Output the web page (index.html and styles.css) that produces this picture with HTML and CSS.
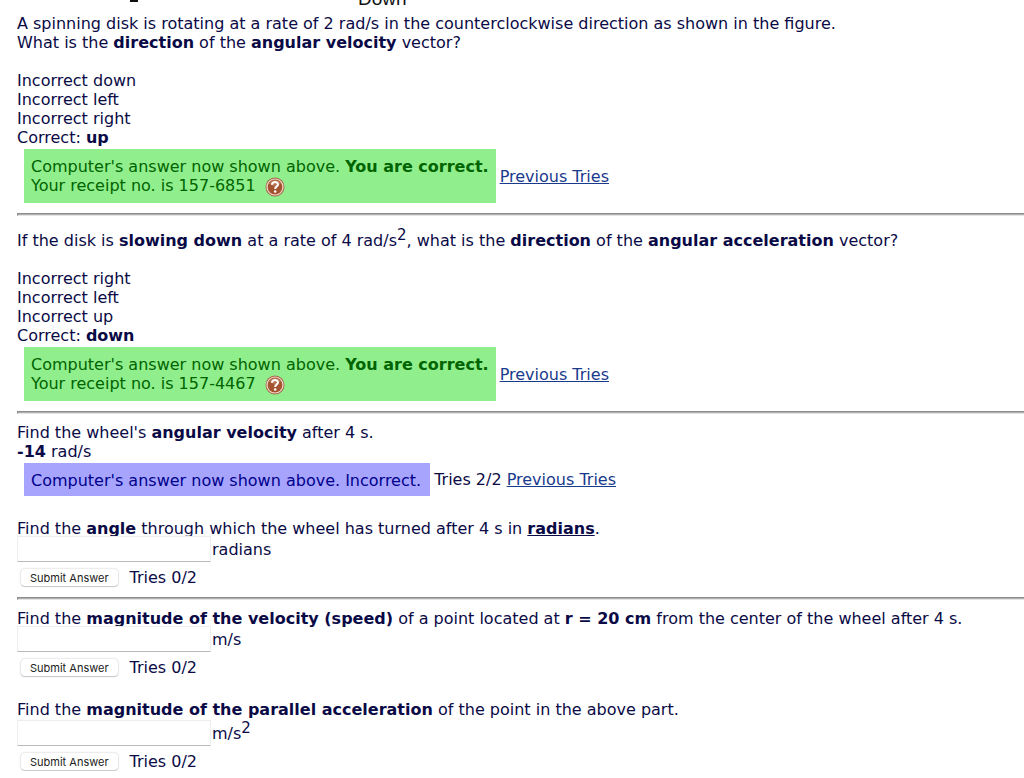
FILE: index.html
```html
<!DOCTYPE html>
<html lang="en">
<head>
    <meta charset="UTF-8">
    <meta name="viewport" content="width=device-width, initial-scale=1.0">
    <title>Rotating Disk</title>
    <link rel="stylesheet" href="styles.css">
</head>
<body>
    <svg class="symbols" aria-hidden="true">
        <symbol id="help" viewBox="0 0 20 20">
            <circle cx="10" cy="10" r="9.5" fill="#a8664c"/>
            <circle cx="10" cy="10" r="8.6" fill="#f3dccb"/>
            <circle cx="10" cy="10" r="7.4" fill="#a3532f"/>
            <path d="M4 6.5a7 7 0 0 1 12 0L10 10z" fill="#b87352"/>
            <path d="M7 7.8C7.1 4 13 4.2 13 7.5C13 9.6 10.2 9.5 10.2 12" fill="none" stroke="#fff" stroke-width="2.1"/>
            <circle cx="10.2" cy="14.5" r="1.3" fill="#fff"/>
        </symbol>
    </svg>

    <div class="figure">
        <span class="mark"></span>
        <span class="caption">Down</span>
    </div>

    <!-- Direction of angular velocity -->
    <div class="problem">
        <p>A spinning disk is rotating at a rate of 2 rad/s in the counterclockwise direction as shown in the figure.<br>
        What is the <b>direction</b> of the <b>angular velocity</b> vector?</p>
        <ul class="choices">
            <li>Incorrect down</li>
            <li>Incorrect left</li>
            <li>Incorrect right</li>
            <li>Correct: <b>up</b></li>
        </ul>
        <div class="status">
            <div class="result correct">Computer's answer now shown above. <b>You are correct.</b><br>
            Your receipt no. is 157-6851 <svg class="help"><use href="#help"/></svg></div>
            <a href="#">Previous Tries</a>
        </div>
    </div>
    <hr>

    <!-- Direction of angular acceleration -->
    <div class="problem slowing">
        <p>If the disk is <b>slowing down</b> at a rate of 4 rad/s<sup>2</sup>, what is the <b>direction</b> of the <b>angular acceleration</b> vector?</p>
        <ul class="choices">
            <li>Incorrect right</li>
            <li>Incorrect left</li>
            <li>Incorrect up</li>
            <li>Correct: <b>down</b></li>
        </ul>
        <div class="status">
            <div class="result correct">Computer's answer now shown above. <b>You are correct.</b><br>
            Your receipt no. is 157-4467 <svg class="help"><use href="#help"/></svg></div>
            <a href="#">Previous Tries</a>
        </div>
    </div>
    <hr>

    <!-- Numerical answers -->
    <div class="problem">
        <p>Find the wheel's <b>angular velocity</b> after 4 s.<br>
        <b>-14</b> rad/s</p>
        <div class="status">
            <div class="result incorrect">Computer's answer now shown above. Incorrect.</div>
            <span>Tries 2/2 <a href="#">Previous Tries</a></span>
        </div>
    </div>

    <form class="problem part">
        <p>Find the <b>angle</b> through which the wheel has turned after 4 s in <b><u>radians</u></b>.</p>
        <div class="answer">
            <input type="text" id="angle">
            <label for="angle">radians</label>
        </div>
        <div class="submit">
            <button type="button">Submit Answer</button>
            <span>Tries 0/2</span>
        </div>
    </form>
    <hr>

    <form class="problem">
        <p>Find the <b>magnitude of the velocity (speed)</b> of a point located at <b>r = 20 cm</b> from the center of the wheel after 4 s.</p>
        <div class="answer">
            <input type="text" id="speed">
            <label for="speed">m/s</label>
        </div>
        <div class="submit">
            <button type="button">Submit Answer</button>
            <span>Tries 0/2</span>
        </div>
    </form>

    <form class="problem part">
        <p>Find the <b>magnitude of the parallel acceleration</b> of the point in the above part.</p>
        <div class="answer raised">
            <input type="text" id="acceleration">
            <label for="acceleration">m/s<sup>2</sup></label>
        </div>
        <div class="submit">
            <button type="button">Submit Answer</button>
            <span>Tries 0/2</span>
        </div>
    </form>
</body>
</html>
```
FILE: styles.css
```css
* {
    margin: 0;
    padding: 0;
    box-sizing: border-box;
}
body {
    padding-left: 17px;
    background-color: #fff;
    color: #0a0a46;
    font-family: Verdana, "DejaVu Sans", sans-serif;
    font-size: 16px;
    line-height: 19px;
    overflow-x: hidden;
}
a {
    color: #1a3a8c;
}
sup {
    font-size: 15px;
    line-height: 0;
    vertical-align: 6px;
}
hr {
    height: 3px;
    border: 1px solid #8c8c8c;
    border-right: none;
    border-bottom-color: #e4e4e4;
    background-color: #b0b0b0;
    margin: 10px 0 9px;
}
.symbols {
    display: none;
}

/* Bottom edge of the disk figure */
.figure {
    display: flex;
    align-items: flex-end;
    height: 14px;
    padding: 0 0 6px 113px;
    overflow: hidden;
    color: #111;
    font-family: "Liberation Sans", Arial, sans-serif;
    font-size: 19px;
}
.mark {
    width: 8px;
    height: 8px;
    margin-bottom: 6px;
    background-color: #111;
}
.caption {
    margin-left: 220px;
}

.choices {
    list-style: none;
    margin-top: 19px;
}
.slowing {
    padding-top: 6px;
}
.part {
    margin-top: 23px;
}
.status {
    display: flex;
    align-items: center;
    gap: 4px;
    margin: 2px 0 0 7px;
}
.result {
    padding: 8px 7px 6px;
}
.correct {
    padding-bottom: 8px;
    background-color: #90ee8c;
    color: #006400;
}
.incorrect {
    padding-right: 9px;
    background-color: #a6a4fd;
    color: #00008b;
}
.help {
    width: 20px;
    height: 20px;
    margin: -4px 0 -4px 4px;
    vertical-align: -2px;
}

.answer {
    display: flex;
    align-items: center;
    gap: 1px;
    margin-top: -2px;
}
.raised {
    margin-top: 1px;
}
.answer input {
    width: 194px;
    height: 26px;
    padding: 0 4px;
    border: 1px solid #eee;
    border-bottom: 1px solid #bbb;
    background-color: #fff;
    font: inherit;
}
.submit {
    display: flex;
    align-items: center;
    gap: 12px;
    margin: 6px 0 0 4px;
}
.submit button {
    height: 17px;
    padding: 1px 9px 0;
    border: none;
    border-radius: 4px;
    background-color: #fff;
    box-shadow: 0 0 2px #bbb, 0 1px 1px #ccc;
    color: #222;
    font-family: Inter, sans-serif;
    font-size: 11px;
    line-height: 16px;
}
```
